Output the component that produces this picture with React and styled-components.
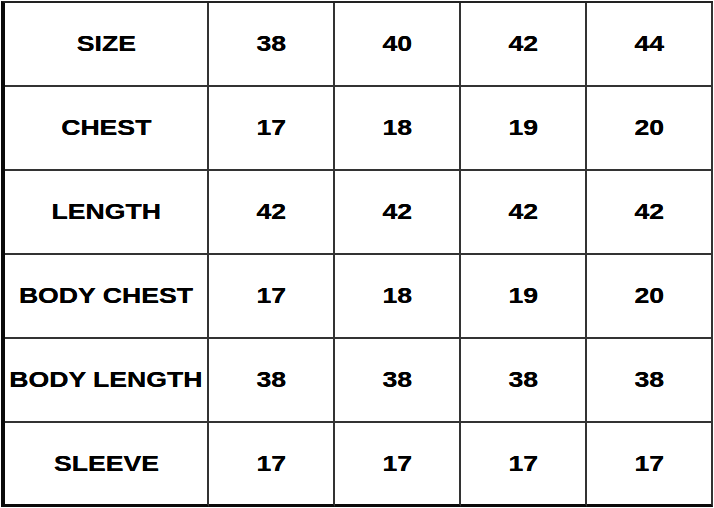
import React from 'react';
import styled, { createGlobalStyle } from 'styled-components';

const GlobalStyle = createGlobalStyle`
  html, body {
    margin: 0;
    padding: 0;
    background: #fff;
  }
`;

// size chart data, first entry of each row is the label
const rows = [
  ['SIZE', '38', '40', '42', '44'],
  ['CHEST', '17', '18', '19', '20'],
  ['LENGTH', '42', '42', '42', '42'],
  ['BODY CHEST', '17', '18', '19', '20'],
  ['BODY LENGTH', '38', '38', '38', '38'],
  ['SLEEVE', '17', '17', '17', '17'],
];

const Chart = styled.div`
  display: grid;
  grid-template-columns: 204px repeat(4, 126px);
  grid-auto-rows: 84px;
  margin: 1px 0 0 1px;
  width: max-content;
  border-left: 4px solid #0a0a0a;
  border-top: 2px solid #222;
  background: #fff;
`;

const Cell = styled.div`
  box-sizing: border-box;
  display: flex;
  align-items: center;
  justify-content: center;
  border-right: 2px solid #333;
  border-bottom: ${(p) => (p.$last ? '3px solid #0a0a0a' : '2px solid #333')};
  font-family: 'Liberation Sans', Arial, sans-serif;
  font-weight: 700;
  font-size: 22px;
  color: #000;
  white-space: nowrap;
`;

const Label = styled.span`
  display: inline-block;
  transform: scaleX(1.21);
  text-shadow: 0 0 0.4px #000;
`;

const App = () => {
  return (
    <>
      <GlobalStyle />
      <Chart>
        {rows.map((row, i) =>
          row.map((val, j) => (
            <Cell key={i + '-' + j} $last={i === rows.length - 1}>
              <Label>{val}</Label>
            </Cell>
          ))
        )}
      </Chart>
    </>
  );
};

export default App;
